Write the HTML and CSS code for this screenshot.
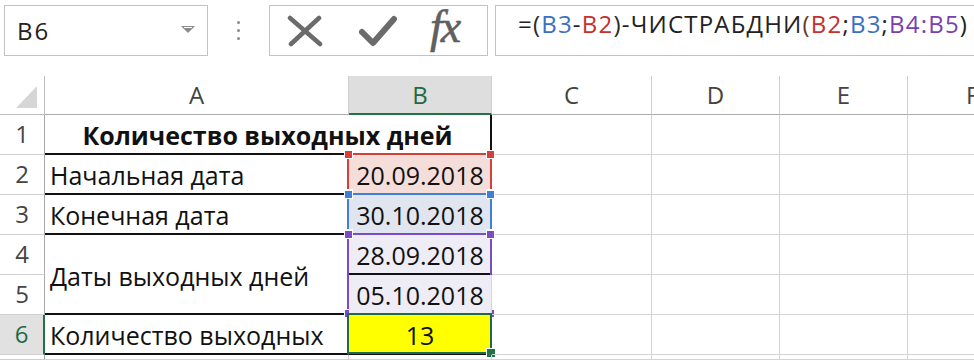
FILE: index.html
```html
<!DOCTYPE html>
<html lang="ru">
<head>
<meta charset="utf-8">
<link rel="stylesheet" href="styles.css">
</head>
<body>
<div class="app">
  <div class="fbar">
    <div class="namebox">
      <span class="nb-text">B6</span>
      <svg class="nb-arrow" width="14" height="7" viewBox="0 0 14 7"><path d="M0 0H14L7 7Z" fill="#8a8a8a"/><path d="M3 1.5H11" stroke="#fff" stroke-width="1"/></svg>
    </div>
    <div class="grip"><i></i><i></i><i></i></div>
    <div class="fxbtns">
      <svg class="ico-x" width="36" height="32" viewBox="0 0 36 32"><path d="M3 3L33 29M32 3L4 29" stroke="#6b6b6b" stroke-width="4.5" stroke-linecap="round"/></svg>
      <svg class="ico-ok" width="38" height="32" viewBox="0 0 38 32"><path d="M3 17L14 28L35 4" fill="none" stroke="#6b6b6b" stroke-width="6" stroke-linecap="round" stroke-linejoin="round"/></svg>
      <span class="fx">fx</span>
    </div>
    <div class="formula">=<span class="p-dk">(</span><span class="r-blue">B3</span>-<span class="r-red">B2</span><span class="p-dk">)</span>-ЧИСТРАБДНИ<span class="p-br">(</span><span class="r-red">B2</span>;<span class="r-blue">B3</span>;<span class="r-purple">B4:B5</span>)</div>
  </div>

  <div class="sheet">
    <div class="corner"><svg width="21" height="22" viewBox="0 0 21 22"><path d="M21 0V22H0Z" fill="#d6d6d6"/></svg></div>
    <div class="ch">A</div>
    <div class="ch ch-sel">B</div>
    <div class="ch">C</div>
    <div class="ch">D</div>
    <div class="ch">E</div>
    <div class="ch ch-f">F</div>

    <div class="rh">1</div>
    <div class="c title">Количество выходных дней</div>
    <div class="c"></div><div class="c"></div><div class="c"></div><div class="c"></div>

    <div class="rh">2</div>
    <div class="c a">Начальная дата</div>
    <div class="c b b-red">20.09.2018<span class="frame f-red"><i class="h tl"></i><i class="h tr"></i><i class="h bl"></i><i class="h br"></i></span></div>
    <div class="c"></div><div class="c"></div><div class="c"></div><div class="c"></div>

    <div class="rh">3</div>
    <div class="c a">Конечная дата</div>
    <div class="c b b-blue">30.10.2018<span class="frame f-blue"><i class="h tl"></i><i class="h tr"></i><i class="h bl"></i><i class="h br"></i></span></div>
    <div class="c"></div><div class="c"></div><div class="c"></div><div class="c"></div>

    <div class="rh">4</div>
    <div class="c a merged">Даты выходных дней</div>
    <div class="c b b-pur b4">28.09.2018<span class="frame f-pur"><i class="h tl"></i><i class="h tr"></i><i class="h bl"></i><i class="h br"></i></span></div>
    <div class="c"></div><div class="c"></div><div class="c"></div><div class="c"></div>

    <div class="rh">5</div>
    <div class="c b b-pur">05.10.2018</div>
    <div class="c"></div><div class="c"></div><div class="c"></div><div class="c"></div>

    <div class="rh rh-sel">6</div>
    <div class="c a">Количество выходных</div>
    <div class="c b b-yel">13<span class="sel"><i class="fill"></i></span></div>
    <div class="c"></div><div class="c"></div><div class="c"></div><div class="c"></div>

    <div class="rh"></div>
    <div class="c"></div><div class="c"></div><div class="c"></div><div class="c"></div><div class="c"></div><div class="c"></div>
  </div>
</div>
</body>
</html>
```

FILE: styles.css
```css
html, body {
  margin: 0;
  padding: 0;
  background: #fff;
}
body {
  width: 974px;
  height: 360px;
  overflow: hidden;
  font-family: "Open Sans", "Noto Sans", sans-serif;
}
.app {
  display: flex;
  flex-direction: column;
}

/* formula bar */
.fbar {
  display: flex;
  align-items: flex-start;
  padding-top: 5px;
  height: 51px;
}
.namebox {
  box-sizing: border-box;
  margin-left: 4px;
  width: 204px;
  height: 51px;
  border: 1px solid #c3c3c3;
  display: flex;
  align-items: center;
  justify-content: space-between;
  padding: 0 12px 0 12px;
}
.nb-text {
  font-size: 24px;
  letter-spacing: 2px;
  color: #222;
}
.nb-arrow {
  margin-bottom: 2px;
}
.grip {
  width: 61px;
  height: 51px;
  display: flex;
  flex-direction: column;
  align-items: center;
  justify-content: center;
  gap: 5px;
}
.grip i {
  display: block;
  width: 3px;
  height: 3px;
  background: #8a8a8a;
  border-radius: 50%;
}
.fxbtns {
  box-sizing: border-box;
  width: 219px;
  height: 51px;
  border: 1px solid #c3c3c3;
  display: flex;
  align-items: center;
  padding-left: 17px;
}
.ico-x { margin-right: 36px; }
.ico-ok { margin-right: 33px; }
.fx {
  font-family: "Liberation Serif", "DejaVu Serif", serif;
  font-style: italic;
  font-size: 46px;
  color: #606060;
  line-height: 1;
  letter-spacing: -2px;
  margin-top: -8px;
  -webkit-text-stroke: 0.6px #606060;
}
.formula {
  box-sizing: border-box;
  margin-left: 7px;
  flex: 1;
  height: 51px;
  border: 1px solid #c3c3c3;
  border-right: none;
  font-size: 24px;
  letter-spacing: 1.2px;
  color: #222;
  padding: 2px 0 0 22px;
  line-height: 32px;
  white-space: nowrap;
}
.r-blue { color: #3a6fc4; }
.r-red { color: #c7302b; }
.r-purple { color: #7a3fb0; }
.p-dk { color: #2a2a2a; }
.p-br { color: #6b3a2a; }

/* sheet */
.sheet {
  margin-top: 20px;
  display: grid;
  grid-template-columns: 45px 304px 143px 160px 128px 128px 1fr;
  grid-template-rows: 39px repeat(6, 40px) 5px;
}
.sheet > div {
  box-sizing: border-box;
  border-right: 1px solid #d4d4d4;
  border-bottom: 1px solid #d4d4d4;
  position: relative;
}
.corner {
  display: flex;
  align-items: flex-end;
  justify-content: flex-end;
  padding: 0 7px 6px 0;
  border-color: #bcbcbc !important;
}
.sheet > .ch {
  font-size: 24px;
  color: #444;
  text-align: center;
  line-height: 38px;
  border-right-color: #cfcfcf;
  border-bottom-color: #ababab;
}
.sheet > .ch-sel {
  background: #dedede;
  color: #1d6b3e;
  border-bottom: 2px solid #217346;
  line-height: 37px;
}
.sheet > .ch-f {
  text-align: left;
  padding-left: 58px;
}
.sheet > .rh {
  font-size: 24px;
  color: #444;
  text-align: center;
  line-height: 38px;
  border-right-color: #a9a9a9;
  border-bottom-color: #d0d0d0;
}
.sheet > .rh-sel {
  background: #e1e1e1;
  color: #1d6b3e;
  border-right: 2px solid #217346;
}

.sheet > .c {
  font-family: "Open Sans", "Noto Sans", sans-serif;
  font-size: 25px;
  color: #111;
  line-height: 30px;
  display: flex;
  align-items: flex-end;
  padding-bottom: 3px;
  white-space: nowrap;
}
.sheet > .a {
  padding-left: 5px;
  border-bottom: 2px solid #111;
  border-right-color: transparent;
}
.sheet > .title {
  grid-column: span 2;
  font-weight: bold;
  justify-content: center;
  border-bottom: 2px solid #111;
  border-right: 2px solid #111;
}
.sheet > .merged {
  grid-row: span 2;
  align-items: center;
  padding-bottom: 0;
  padding-top: 4px;
}
.sheet > .b {
  justify-content: center;
  border-bottom: 2px solid #111;
  border-right-color: #d4d4d4;
}
.b-red { background: #f5ded9; }
.b-blue { background: #e1e5ef; }
.b-pur { background: #eeecf4; }
.b-yel { background: #ffff00; }

.frame {
  position: absolute;
  top: -2px;
  left: -2px;
  right: -1px;
  bottom: -2px;
  border: 2px solid;
  pointer-events: none;
}
.f-red { border-color: #d6403a; color: #d6403a; }
.f-blue { border-color: #3f7fd6; color: #3f7fd6; }
.f-pur { border-color: #7b4dc4; color: #7b4dc4; bottom: -42px; }
.h {
  position: absolute;
  width: 7px;
  height: 7px;
  background: currentColor;
  box-shadow: 0 0 0 1px #fff;
}
.h.tl { top: -4px; left: -4px; }
.h.tr { top: -4px; right: -4px; }
.h.bl { bottom: -4px; left: -4px; }
.h.br { bottom: -4px; right: -4px; }

.sel {
  position: absolute;
  top: -2px;
  left: -2px;
  right: -1px;
  bottom: -1px;
  border: 2px solid #1e6a4a;
}
.fill {
  position: absolute;
  right: -5px;
  bottom: -5px;
  width: 8px;
  height: 8px;
  background: #217346;
  box-shadow: 0 0 0 1px #fff;
}
```
